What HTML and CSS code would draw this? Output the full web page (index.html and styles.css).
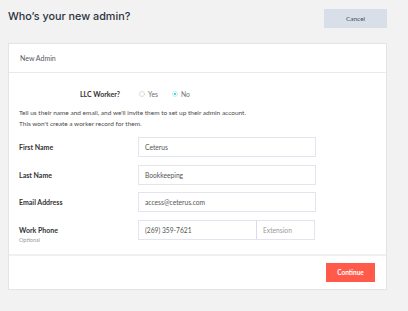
FILE: index.html
```html
<!DOCTYPE html>
<html>
<head>
<meta charset="utf-8">
<link rel="stylesheet" href="styles.css">
</head>
<body>
<div class="page">
  <div class="top">
    <h1 class="title">Who’s your new admin?</h1>
    <button class="btn-cancel">Cancel</button>
  </div>
  <div class="card">
    <div class="card-head">New Admin</div>
    <div class="card-body">
      <div class="llc-row">
        <div class="llc-label">LLC Worker?</div>
        <div class="radios">
          <span class="radio"><span class="dot"></span>Yes</span>
          <span class="radio"><span class="dot on"></span>No</span>
        </div>
      </div>
      <p class="info">Tell us their name and email, and we'll invite them to set up their admin account.<br>This won't create a worker record for them.</p>
      <div class="field">
        <div class="label">First Name</div>
        <div class="input">Ceterus</div>
      </div>
      <div class="field">
        <div class="label">Last Name</div>
        <div class="input">Bookkeeping</div>
      </div>
      <div class="field">
        <div class="label">Email Address</div>
        <div class="input">access@ceterus.com</div>
      </div>
      <div class="field">
        <div class="label">Work Phone<span class="sub">Optional</span></div>
        <div class="input-group">
          <div class="input phone">(269) 359-7621</div>
          <div class="input ext">Extension</div>
        </div>
      </div>
    </div>
    <div class="card-foot">
      <button class="btn-continue">Continue</button>
    </div>
  </div>
</div>
</body>
</html>
```
FILE: styles.css
```css
* { box-sizing: border-box; }
body {
  margin: 0;
  background: #f2f2f2;
  font-family: Lato, "Liberation Sans", sans-serif;
  color: #333a45;
}
.page {
  width: 379px;
  margin-left: 8px;
}
.top {
  display: flex;
  justify-content: space-between;
  align-items: flex-start;
  padding-top: 9px;
  height: 43px;
}
.title {
  margin: 1px 0 0;
  font-family: Inter, Lato, sans-serif;
  font-size: 10.8px;
  font-weight: 500;
  color: #2c3340;
}
.btn-cancel {
  width: 63px;
  height: 19px;
  border: none;
  background: #d8dfe9;
  font-family: inherit;
  font-size: 6.5px;
  color: #4a505a;
  padding: 0;
}
.card {
  background: #fff;
  border: 1px solid #e4e4e6;
}
.card-head {
  height: 29px;
  padding-left: 11px;
  display: flex;
  align-items: center;
  font-size: 7px;
  color: #555a62;
  border-bottom: 1px solid #e8e9f0;
}
.card-body {
  padding: 13px 10px 14px;
}
.llc-row {
  display: flex;
  align-items: center;
  height: 15px;
}
.llc-label {
  width: 119px;
  padding-right: 18px;
  text-align: right;
  font-size: 7px;
  font-weight: 700;
  color: #333;
}
.radios {
  display: flex;
  gap: 14px;
  padding-left: 1px;
}
.radio {
  display: flex;
  align-items: center;
  gap: 3px;
  font-size: 6.8px;
  color: #707070;
}
.dot {
  width: 6px;
  height: 6px;
  border-radius: 50%;
  border: 1px solid #dcdde3;
  position: relative;
}
.dot.on { border-color: #bdeff0; }
.dot.on::after {
  content: "";
  position: absolute;
  left: 1px; top: 1px;
  width: 2px; height: 2px;
  border-radius: 50%;
  background: #1ec8c8;
}
.info {
  margin: 6px 0 8px;
  font-size: 6.5px;
  line-height: 11px;
  color: #4a4a4a;
}
.field {
  display: flex;
  align-items: flex-start;
  height: 20px;
  margin-bottom: 7.5px;
}
.field:last-child { margin-bottom: 0; }
.label {
  width: 119px;
  padding-top: 6px;
  font-size: 7px;
  font-weight: 700;
  color: #333;
  display: flex;
  flex-direction: column;
}
.sub {
  font-weight: 400;
  font-size: 5.5px;
  color: #999;
  margin-top: 3px;
}
.input {
  width: 178px;
  height: 20px;
  border: 1px solid #e2e4ee;
  display: flex;
  align-items: center;
  padding-left: 6px;
  font-size: 6.7px;
  color: #555;
}
.input-group {
  display: flex;
  width: 178px;
}
.input.phone { width: 119px; }
.input.ext {
  width: 59px;
  border-left: 1px solid #d8dcec;
  margin-left: -1px;
  color: #999;
}
.card-foot {
  border-top: 2px solid #f0f0f3;
  display: flex;
  justify-content: flex-end;
  padding: 7px 11px 7px;
}
.btn-continue {
  width: 49px;
  height: 19px;
  border: none;
  background: #ff5a4a;
  color: #fff;
  font-family: inherit;
  font-size: 6.5px;
  font-weight: 700;
  padding: 0;
}
```
